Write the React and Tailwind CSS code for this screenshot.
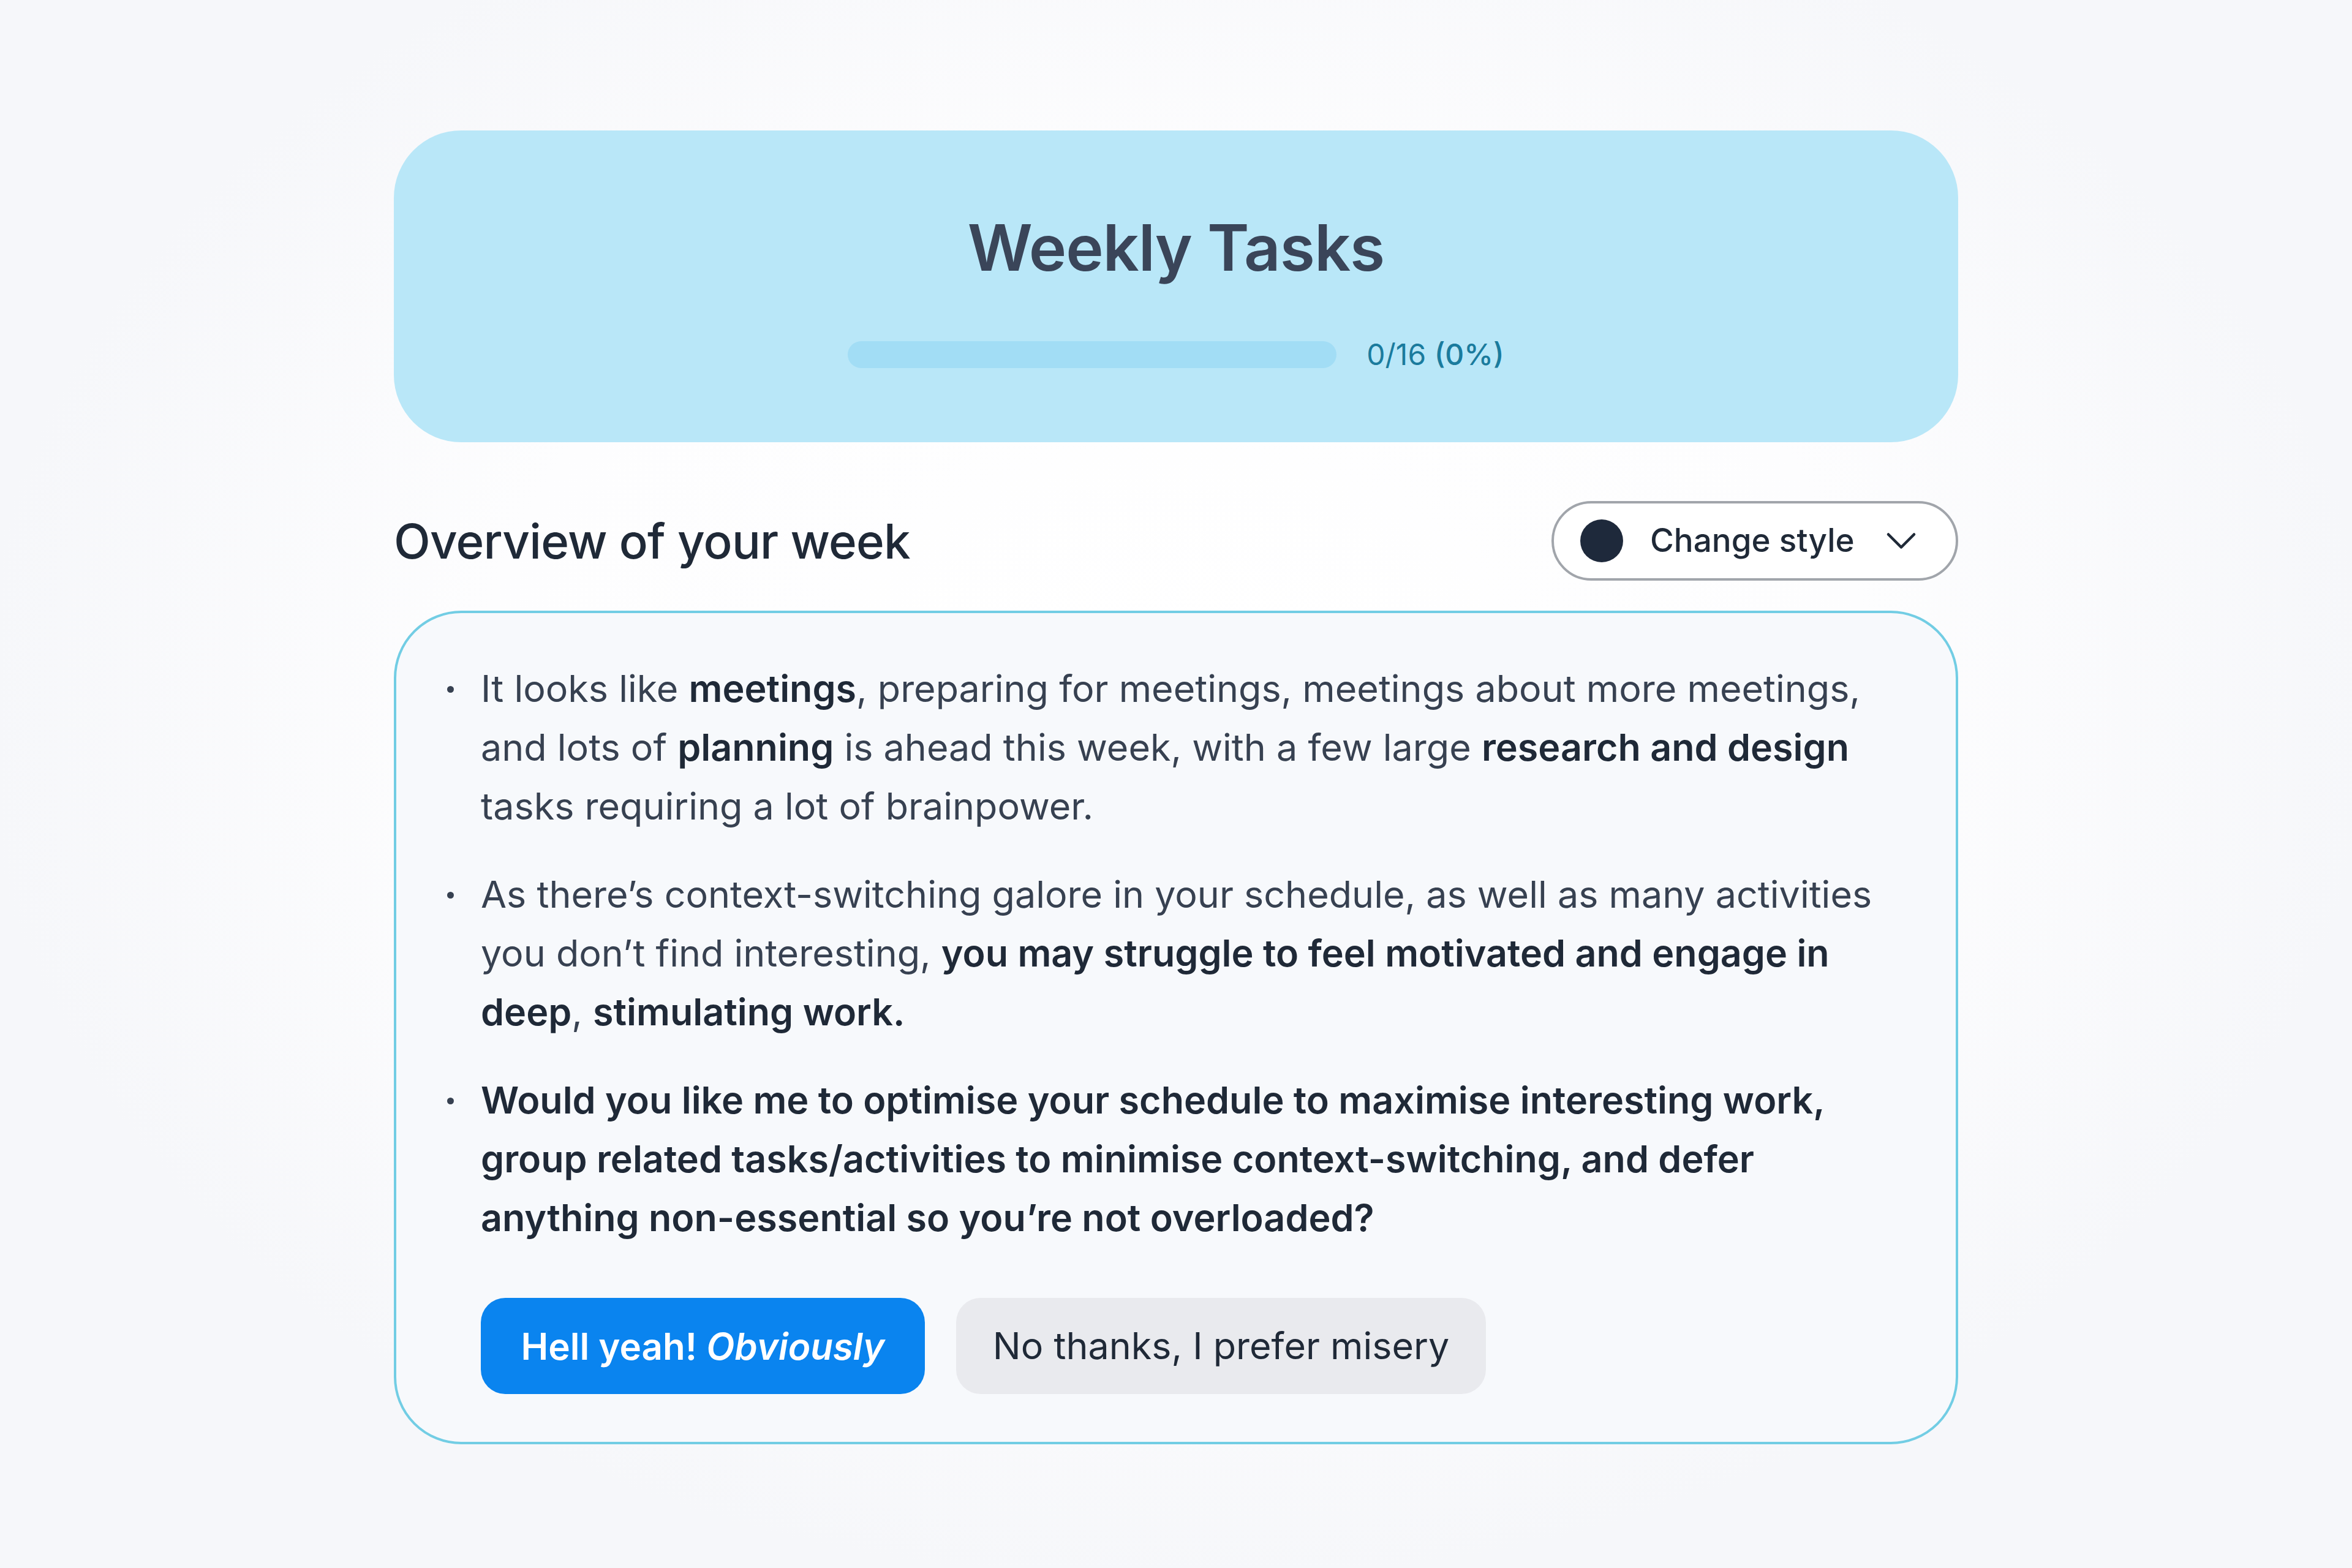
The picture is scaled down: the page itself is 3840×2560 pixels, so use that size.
import { ChevronDown } from 'lucide-react';

function Bullet({ children }) {
  return (
    <li className="flex">
      <span className="w-[55px] shrink-0 pt-[44px]">
        <span className="block w-[11px] h-[11px] rounded-full bg-[#374151]" />
      </span>
      <p className="text-[61px] leading-[96px] text-[#374151]">{children}</p>
    </li>
  );
}

export default function App() {
  return (
    <div className="min-h-screen w-full bg-[radial-gradient(ellipse_at_50%_45%,#ffffff_0%,#fdfdfe_42%,#f6f7fa_72%)] font-[Inter,'Noto_Sans',sans-serif] flex justify-center pt-[213px] pb-[204px]">
      <div className="w-[2554px] flex flex-col">
        {/* header card */}
        <header className="h-[509px] rounded-[110px] bg-[#b9e7f8] flex flex-col items-center pt-[139px]">
          <h1 className="text-[104px] leading-none font-semibold text-[#3a4559] tracking-[-0.01em]">
            Weekly Tasks
          </h1>
          <div className="mt-[93px] h-[60px] flex items-center gap-[49px]">
            <div className="w-[798px] h-[44px] rounded-full bg-[#a2ddf5]" />
            <span className="text-[48px] text-[#1a7b9d]">
              0/16 <span className="font-medium">(0%)</span>
            </span>
          </div>
        </header>

        {/* overview row */}
        <div className="mt-[96px] h-[130px] flex items-center justify-between">
          <h2 className="text-[78px] font-medium text-[#1f2937] tracking-[-0.01em]">Overview of your week</h2>
          <button className="h-[130px] w-[664px] rounded-full border-[4px] border-[#a1a5ab] bg-white flex items-center pl-[43px]">
            <span className="w-[70px] h-[70px] rounded-full bg-[#1e293b] shrink-0" />
            <span className="ml-[44px] text-[53px] font-medium text-[#1f2937]">Change style</span>
            <ChevronDown size={84} strokeWidth={1.3} className="ml-[34px] text-[#1f2937]" />
          </button>
        </div>

        {/* overview card */}
        <section className="mt-[49px] rounded-[110px] border-[4px] border-[#72cde4] bg-[#f7f9fc] pl-[83px] pr-[40px] pt-[75px] pb-[78px]">
          <ul className="flex flex-col gap-[48px]">
            <Bullet>
              It looks like <b className="font-semibold text-[#1f2937]">meetings</b>, preparing for meetings, meetings about more meetings,
              <br />
              and lots of <b className="font-semibold text-[#1f2937]">planning</b> is ahead this week, with a few large{' '}
              <b className="font-semibold text-[#1f2937]">research and design</b>
              <br />
              tasks requiring a lot of brainpower.
            </Bullet>
            <Bullet>
              As there’s context-switching galore in your schedule, as well as many activities
              <br />
              you don’t find interesting,{' '}
              <b className="font-semibold text-[#1f2937]">you may struggle to feel motivated and engage in</b>
              <br />
              <b className="font-semibold text-[#1f2937]">deep</b>, <b className="font-semibold text-[#1f2937]">stimulating work.</b>
            </Bullet>
            <Bullet>
              <span className="font-semibold text-[#1f2937]">
                Would you like me to optimise your schedule to maximise interesting work,
                <br />
                group related tasks/activities to minimise context-switching, and defer
                <br />
                anything non-essential so you’re not overloaded?
              </span>
            </Bullet>
          </ul>

          <div className="mt-[83px] ml-[55px] flex gap-[51px]">
            <button className="h-[157px] w-[725px] rounded-[40px] bg-[#0a84ef] text-white text-[60px] font-semibold flex items-center justify-center">
              Hell yeah!&nbsp;<i>Obviously</i>
            </button>
            <button className="h-[157px] w-[865px] rounded-[40px] bg-[#e9eaee] text-[#1f2937] text-[61px] flex items-center justify-center">
              No thanks, I prefer misery
            </button>
          </div>
        </section>
      </div>
    </div>
  );
}
